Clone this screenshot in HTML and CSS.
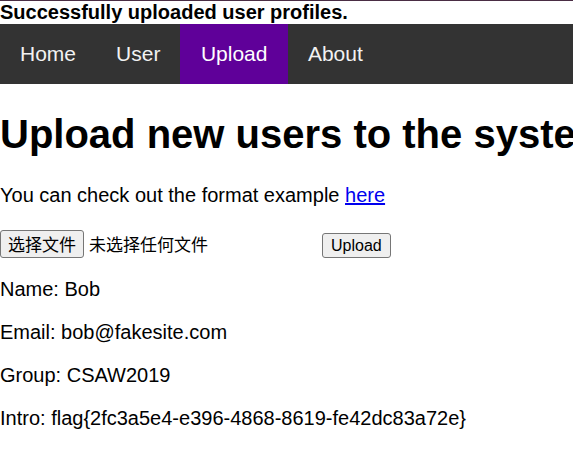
FILE: index.html
```html
<!DOCTYPE html>
<html lang="en">
<head>
<meta charset="utf-8">
<title>Upload</title>
<link rel="stylesheet" href="styles.css">
</head>
<body>
<div class="topline"></div>
<div class="notice">Successfully uploaded user profiles.</div>
<nav class="topnav">
  <a class="navlink" href="#">Home</a>
  <a class="navlink" href="#">User</a>
  <a class="navlink active" href="#">Upload</a>
  <a class="navlink" href="#">About</a>
</nav>
<main class="content">
  <h1 class="title">Upload new users to the system</h1>
  <p class="para">You can check out the format example <a class="link" href="#">here</a></p>
  <form class="upload-form">
    <span class="file-btn">选择文件</span><span class="file-label">未选择任何文件</span><span class="submit-btn">Upload</span>
  </form>
  <p class="para">Name: Bob</p>
  <p class="para">Email: bob@fakesite.com</p>
  <p class="para">Group: CSAW2019</p>
  <p class="para">Intro: flag{2fc3a5e4-e396-4868-8619-fe42dc83a72e}</p>
</main>
</body>
</html>
```
FILE: styles.css
```css
html, body {
  margin: 0;
  padding: 0;
  background: #fff;
  overflow: hidden;
}
body {
  font-family: "Liberation Sans", Arial, "Noto Sans CJK SC", sans-serif;
  color: #000;
  font-size: 20px;
}
.topline {
  height: 1px;
  background: #4a2d44;
}
.notice {
  font-weight: bold;
  font-size: 20px;
  line-height: 23px;
  height: 23px;
  white-space: nowrap;
}
.topnav {
  display: flex;
  background: #333;
  height: 60px;
}
.navlink {
  color: #f2f2f2;
  text-decoration: none;
  font-size: 21px;
  padding: 0 20px;
  display: flex;
  align-items: center;
}
.navlink.active {
  background: #5f0099;
  color: #fff;
  padding: 0 20.5px;
}
.content {
  padding: 0;
  overflow: hidden;
}
.title {
  font-size: 40px;
  margin: 27px 0;
  white-space: nowrap;
  line-height: 46px;
}
.para {
  margin: 20px 0;
  line-height: 23px;
  white-space: nowrap;
}
.link {
  color: #0000ee;
}
.upload-form {
  display: flex;
  align-items: flex-end;
  height: 31px;
}
.file-btn {
  font-family: "Noto Sans CJK SC", sans-serif;
  font-size: 17px;
  line-height: 26px;
  height: 26px;
  padding: 0 7px;
  background: #efefef;
  border: 1px solid #767676;
  border-radius: 3px;
  color: #000;
}
.file-label {
  font-family: "Noto Sans CJK SC", sans-serif;
  font-size: 17px;
  line-height: 26px;
  padding-bottom: 1px;
  margin-left: 5px;
  width: 229px;
}
.submit-btn {
  font-family: "Liberation Sans", Arial, sans-serif;
  font-size: 16px;
  line-height: 23px;
  height: 23px;
  padding: 0 8px;
  margin-left: 4px;
  background: #efefef;
  border: 1px solid #767676;
  border-radius: 3px;
  color: #000;
}
```
